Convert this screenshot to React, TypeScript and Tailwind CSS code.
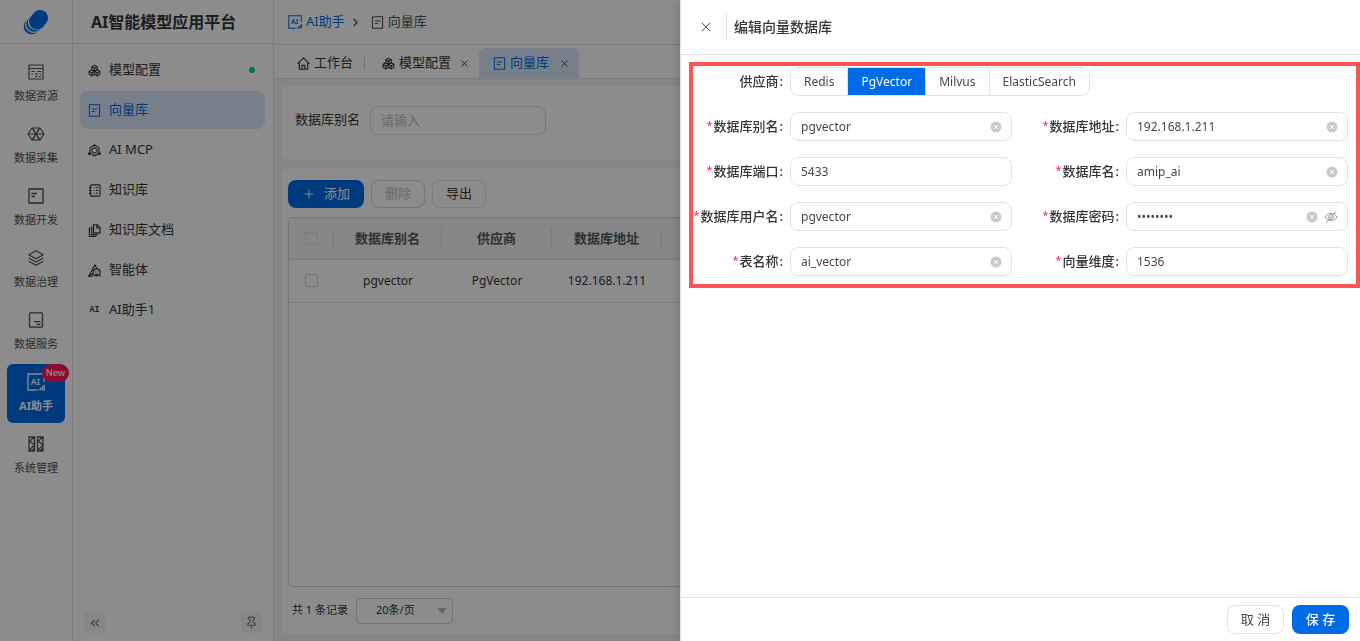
import React, { useState } from 'react';
import { Boxes, ChevronRight, ChevronsLeft, Pin, Plus, X } from 'lucide-react';

type IconProps = { className?: string };

const PanelIcon = ({ className }: IconProps) => (
  <svg viewBox="0 0 16 16" className={className} fill="none" stroke="currentColor" strokeWidth="1.2">
    <path d="M1 1h14v14H1zM1 4.5h14M3.5 7.5h3M9 7.5h4M3.5 10h1.5M7 10h3M11.5 10H13M7 12.5h2.5M11 12.5h2" />
  </svg>
);

const CollectIcon = ({ className }: IconProps) => (
  <svg viewBox="0 0 18 16" className={className} fill="none" stroke="currentColor" strokeWidth="1.2">
    <path d="M5 2h8l4 6-4 6H5L1 8z" />
    <path d="M1 8h16M5 2c4 2.5 4 9.5 0 12M13 2c-4 2.5-4 9.5 0 12M5 2l8 12M13 2L5 14" />
  </svg>
);

const DevIcon = ({ className }: IconProps) => (
  <svg viewBox="0 0 16 16" className={className} fill="none" stroke="currentColor" strokeWidth="1.3">
    <path d="M1 1h14v14H1zM3.5 5.5H9M3.5 8.5H7" />
  </svg>
);

const LayersIcon = ({ className }: IconProps) => (
  <svg viewBox="0 0 16 16" className={className} fill="none" stroke="currentColor" strokeWidth="1.2" strokeLinejoin="round">
    <path d="M8 .8l7.3 4L8 8.8.7 4.8zM.7 8L8 12l7.3-4M.7 11.2l7.3 4 7.3-4" />
  </svg>
);

const ServiceIcon = ({ className }: IconProps) => (
  <svg viewBox="0 0 16 16" className={className} fill="none" stroke="currentColor" strokeWidth="1.3">
    <rect x="1.5" y=".8" width="13" height="14.4" rx="1" />
    <path d="M6 9.7h6.5M8.5 12.3h4" />
  </svg>
);

const SystemIcon = ({ className }: IconProps) => (
  <svg viewBox="0 0 16 16" className={className} fill="none" stroke="currentColor" strokeWidth="1.3">
    <path d="M1 1h5.5v14H1zM9.5 1H15v14H9.5zM1 6l5-5M1.5 5l5 4-5 5M4 15l2.5-3M9.5 6l5-5M10 5l5 4-5 5M12 15l3-3" />
  </svg>
);

const AiIcon = ({ className }: IconProps) => (
  <svg viewBox="0 0 18 18" className={className} fill="none" stroke="currentColor" strokeWidth="1.3">
    <path d="M17 9V1H1v16h9M11.5 17.5V16M13.500 17.5v-3M15.500 17.5V13M17.2 17.5v-6" />
    <text x="8.5" y="12" textAnchor="middle" fontSize="9" fontWeight="600" fontFamily="Noto Sans, sans-serif" fill="currentColor" stroke="none">AI</text>
  </svg>
);

const DocIcon = ({ className }: IconProps) => (
  <svg viewBox="0 0 14 14" className={className} fill="none" stroke="currentColor" strokeWidth="1.1">
    <path d="M1.5.7h11v12.6h-11zM4 5.5h6M4 8h3.5" />
  </svg>
);

const McpIcon = ({ className }: IconProps) => (
  <svg viewBox="0 0 16 16" className={className} fill="none" stroke="currentColor" strokeWidth="1.3">
    <path d="M8 1.5l5.6 3.200v6.6L8 14.5l-5.600-3.200V4.700z" />
    <path d="M8 4.600l3 1.700v3.400l-3 1.700-3-1.700V6.300z" />
    <circle cx="8" cy="1.500" r="1.300" fill="currentColor" stroke="none" />
    <circle cx="1.800" cy="12" r="1.700" fill="currentColor" stroke="none" />
    <circle cx="14.200" cy="12" r="1.700" fill="currentColor" stroke="none" />
  </svg>
);

const NotebookIcon = ({ className }: IconProps) => (
  <svg viewBox="0 0 14 14" className={className} fill="none" stroke="currentColor" strokeWidth="1.2">
    <rect x="2.5" y="1" width="10.5" height="12" rx="1" />
    <path d="M1 4h3M1 7h3M1 10h3M6 4h1M8.5 4H11M6 7h1M8.5 7H11M6 10h1M8.5 10H11" />
  </svg>
);

const FilesIcon = ({ className }: IconProps) => (
  <svg viewBox="0 0 14 14" className={className} fill="none" stroke="currentColor" strokeWidth="1.3">
    <path d="M6 .8h4L13 4v5.5H6zM9.5 1v3.300H13M4 2.800v8.700h7M2.500 4.500h-1v8.800H9" />
  </svg>
);

const AgentIcon = ({ className }: IconProps) => (
  <svg viewBox="0 0 14 14" className={className} fill="none" stroke="currentColor" strokeWidth="1.2">
    <path d="M9.500 4.500L7.500 1 .8 13h4.500M.8 13L6 10M7.800 8.500h.8M10.200 8.500h.8M8 10.700c.8.600 1.800.600 2.600 0M12 12l1.500 1.200" />
    <circle cx="9.300" cy="9" r="3.800" />
  </svg>
);

const AiTextIcon = ({ className }: IconProps) => (
  <svg viewBox="0 0 14 14" className={className}>
    <text x="7" y="9" textAnchor="middle" fontSize="9" fontWeight="700" fontFamily="Liberation Mono, monospace" fill="currentColor">AI</text>
  </svg>
);

const HomeIcon = ({ className }: IconProps) => (
  <svg viewBox="0 0 14 14" className={className} fill="none" stroke="currentColor" strokeWidth="1.2">
    <path d="M.6 7.3L7 1l6.4 6.3M2.5 6v7.2h9V6M5.5 13V9h3v4" />
  </svg>
);

// stacked discs, each one cutting a crescent out of the one behind
const Logo = ({ className }: IconProps) => (
  <svg viewBox="0 0 26 26" className={className}>
    <circle cx="8.6" cy="17.4" r="7.9" fill="#006be6" />
    <circle cx="10.4" cy="15.600" r="8.300" fill="#fff" />
    <circle cx="11.200" cy="14.800" r="8" fill="#006be6" />
    <circle cx="13" cy="13" r="8.300" fill="#fff" />
    <path d="M14 12.600L17 9" stroke="#006be6" strokeWidth="16" strokeLinecap="round" />
  </svg>
);

const ClearIcon = ({ className }: IconProps) => (
  <svg viewBox="0 0 12 12" className={className}>
    <circle cx="6" cy="6" r="5.5" fill="#c9cacb" />
    <path d="M4 4l4 4M8 4L4 8" stroke="#fff" strokeWidth="1" />
  </svg>
);

const EyeOffIcon = ({ className }: IconProps) => (
  <svg viewBox="0 0 14 14" className={className} fill="none" stroke="currentColor" strokeWidth="1">
    <path d="M1 7c2.7-4.7 9.3-4.7 12 0-2.7 4.7-9.3 4.7-12 0zM12 1.5L2.5 12.5" />
    <circle cx="7" cy="7" r="2.3" />
  </svg>
);

const railItems = [
  { label: '数据资源', icon: PanelIcon, size: 'size-4' },
  { label: '数据采集', icon: CollectIcon, size: 'h-4 w-[18px]' },
  { label: '数据开发', icon: DevIcon, size: 'size-4' },
  { label: '数据治理', icon: LayersIcon, size: 'size-4' },
  { label: '数据服务', icon: ServiceIcon, size: 'size-4' },
  { label: 'AI助手', icon: AiIcon, size: 'size-[18px]', active: true, badge: 'New' },
  { label: '系统管理', icon: SystemIcon, size: 'size-4' },
];

const menuItems = [
  { label: '模型配置', icon: Boxes, dot: true },
  { label: '向量库', icon: DocIcon, active: true },
  { label: 'AI MCP', icon: McpIcon },
  { label: '知识库', icon: NotebookIcon },
  { label: '知识库文档', icon: FilesIcon },
  { label: '智能体', icon: AgentIcon },
  { label: 'AI助手1', icon: AiTextIcon },
];

const vendors = ['Redis', 'PgVector', 'Milvus', 'ElasticSearch'];

const fields = [
  { id: 'alias', label: '数据库别名', value: 'pgvector', clearable: true },
  { id: 'host', label: '数据库地址', value: '192.168.1.211', clearable: true },
  { id: 'port', label: '数据库端口', value: '5433' },
  { id: 'dbname', label: '数据库名', value: 'amip_ai', clearable: true },
  { id: 'user', label: '数据库用户名', value: 'pgvector', clearable: true },
  { id: 'password', label: '数据库密码', value: 'postgres', clearable: true, secret: true },
  { id: 'table', label: '表名称', value: 'ai_vector', clearable: true },
  { id: 'dimension', label: '向量维度', value: '1536' },
];

function Rail() {
  return (
    <nav className="flex w-[73px] shrink-0 flex-col border-r border-[#e4e4e7]">
      <div className="flex h-11 items-center justify-center border-b border-[#e4e4e7]">
        <Logo className="size-[26px]" />
      </div>
      <div className="flex flex-col gap-[3px] px-[7px] pt-[10px]">
        {railItems.map(({ label, icon: Icon, size, active, badge }) => (
          <a
            key={label}
            href="#"
            className={`relative flex h-[59px] flex-col items-center rounded-md pt-[9px] text-[11px] leading-4 ${
              active ? 'bg-[#006be6] font-bold text-white' : 'text-[#4b5055]'
            }`}
          >
            <span className="flex h-[18px] items-center">
              <Icon className={size} />
            </span>
            <span className="mt-[7px] whitespace-nowrap">{label}</span>
            {badge && (
              <span className="absolute -right-1 top-0 rounded-full bg-[#ff1457] px-1 text-[9px] font-medium leading-[18px] text-white">
                {badge}
              </span>
            )}
          </a>
        ))}
      </div>
    </nav>
  );
}

function SideMenu() {
  return (
    <aside className="flex w-[201px] shrink-0 flex-col border-r border-[#e4e4e7]">
      <h1 className="flex h-11 items-center border-b border-[#e4e4e7] pl-[18px] text-base font-bold text-[#323639]">
        AI智能模型应用平台
      </h1>
      <ul className="flex flex-col gap-[2px] pl-[7px] pr-2 pt-[7px]">
        {menuItems.map(({ label, icon: Icon, active, dot }) => (
          <li key={label}>
            <a
              href="#"
              className={`flex h-[38px] items-center gap-2 rounded-lg px-2 text-[13px] ${
                active ? 'bg-[#d9e9fb] text-[#006be6]' : 'text-[#323639]'
              }`}
            >
              <Icon className="size-[13px]" />
              <span className="flex-1">{label}</span>
              {dot && <span className="mr-[2px] size-[6px] rounded-full bg-[#00d68f]" />}
            </a>
          </li>
        ))}
      </ul>
      <div className="mt-auto flex justify-between px-[11px] pb-2 text-[#71757a]">
        <button type="button" aria-label="收起" className="flex size-[21px] items-center justify-center rounded-sm bg-[#f4f4f5]">
          <ChevronsLeft className="size-[14px]" />
        </button>
        <button type="button" aria-label="固定" className="flex size-[21px] items-center justify-center rounded-sm bg-[#f4f4f5]">
          <Pin className="size-[13px]" />
        </button>
      </div>
    </aside>
  );
}

function TabBar() {
  return (
    <div className="flex h-[34px] shrink-0 items-end border-b border-[#e4e4e7] pl-[10px] text-[13px] text-[#323639]">
      <a href="#" className="flex h-[30px] items-center gap-1 pl-[13px] pr-[11px]">
        <HomeIcon className="size-[13px]" />
        工作台
      </a>
      <span className="mb-2 h-[14px] w-px bg-[#d4d4d8]" />
      <div className="flex h-[30px] items-center pl-[17px] pr-[9px]">
        <a href="#" className="flex items-center gap-1">
          <Boxes className="size-[13px]" />
          模型配置
        </a>
        <button type="button" aria-label="关闭模型配置" className="ml-2">
          <X className="size-[11px]" />
        </button>
      </div>
      <div className="flex h-[30px] items-center rounded-t-md bg-[#d9e9fb] pl-[14px] pr-[9px]">
        <a href="#" className="flex items-center gap-1 text-[#006be6]">
          <DocIcon className="size-[13px]" />
          向量库
        </a>
        <button type="button" aria-label="关闭向量库" className="ml-[10px]">
          <X className="size-[11px]" />
        </button>
      </div>
    </div>
  );
}

function VectorTable() {
  const bodyCell = 'border-b border-[#e4e4e7] text-center text-xs';
  const headLabel = 'block h-5 border-r border-[#dcdcdf] leading-5';

  return (
    <div className="mt-[9px] flex-1 overflow-hidden rounded-sm border border-[#d4d4d8]">
      <table className="w-full table-fixed border-collapse text-[13px] text-[#323639]">
        <thead>
          <tr className="h-[41px] border-b border-[#e4e4e7] bg-[#f4f4f5] text-[#54585d]">
            <th className="w-[45px] py-[10px]">
              <span className="flex h-5 items-center justify-center border-r border-[#dcdcdf]">
                <input type="checkbox" aria-label="全选" className="block size-[13px] appearance-none rounded-xs border border-[#dfe0e3]" />
              </span>
            </th>
            <th className="w-[108px] font-bold"><span className={headLabel}>数据库别名</span></th>
            <th className="w-[110px] font-bold"><span className={headLabel}>供应商</span></th>
            <th className="w-[110px] font-bold"><span className={headLabel}>数据库地址</span></th>
            <th className="font-bold">数据库名</th>
          </tr>
        </thead>
        <tbody>
          <tr className="h-[43px]">
            <td className={bodyCell}>
              <input type="checkbox" aria-label="选择 pgvector" className="mx-auto block size-[13px] appearance-none rounded-xs border border-[#ccd3da]" />
            </td>
            <td className={bodyCell}>pgvector</td>
            <td className={bodyCell}>PgVector</td>
            <td className={bodyCell}>192.168.1.211</td>
            <td className={bodyCell}>amip_ai</td>
          </tr>
        </tbody>
      </table>
    </div>
  );
}

function Workspace() {
  return (
    <main className="flex min-w-0 flex-1 flex-col">
      <div className="flex h-[45px] shrink-0 items-center border-b border-[#e4e4e7] pl-[14px] text-[13px] text-[#4b5055]">
        <a href="#" className="flex items-center gap-1 text-[#006be6]">
          <AiIcon className="size-[14px]" />
          AI助手
        </a>
        <ChevronRight className="mx-1 size-[13px]" />
        <span className="ml-[5px] flex items-center gap-1">
          <DocIcon className="size-[13px]" />
          向量库
        </span>
      </div>
      <TabBar />
      <div className="flex flex-1 flex-col gap-2 bg-[#f1f3f6] p-[7px]">
        <form className="flex h-[74px] items-center rounded-md bg-white px-[14px] pb-[6px] text-[13px] text-[#323639]">
          <label htmlFor="q-alias">数据库别名</label>
          <input
            id="q-alias"
            placeholder="请输入"
            className="ml-[10px] h-[29px] w-[176px] rounded-lg border border-[#dcdcdf] px-[10px] placeholder:text-[#bfc1c4]"
          />
        </form>
        <section className="flex flex-1 flex-col rounded-md bg-white px-[7px] pt-3">
          <div className="flex gap-[7px] text-[13px]">
            <button type="button" className="flex h-7 items-center gap-2 rounded-lg bg-[#006be6] px-[14px] text-white">
              <Plus className="size-[14px]" strokeWidth={1.5} />
              添加
            </button>
            <button type="button" disabled className="h-7 rounded-lg border border-[#d4d4d8] px-[13px] text-[#bfc1c4]">
              删除
            </button>
            <button type="button" className="h-7 rounded-lg border border-[#e4e4e7] px-[13px] text-[#323639]">
              导出
            </button>
          </div>
          <VectorTable />
          <div className="flex h-[47px] items-center gap-2 pl-1 text-[11px] text-[#323639]">
            <span>共 1 条记录</span>
            <div className="relative">
              <select aria-label="每页条数" className="h-[26px] w-[97px] appearance-none rounded-sm border border-[#d4d4d8] pl-[19px]">
                <option>20条/页</option>
              </select>
              <svg viewBox="0 0 10 6" className="pointer-events-none absolute right-[6px] top-[10px] h-[6px] w-[10px]">
                <path d="M0 0h10L5 6z" fill="#b9bcc4" />
              </svg>
            </div>
          </div>
        </section>
      </div>
    </main>
  );
}

function EditDrawer() {
  const [vendor, setVendor] = useState('PgVector');
  const [values, setValues] = useState<Record<string, string>>(
    Object.fromEntries(fields.map((f) => [f.id, f.value]))
  );
  const [showSecret, setShowSecret] = useState(false);

  const setValue = (id: string, value: string) => setValues((prev) => ({ ...prev, [id]: value }));

  return (
    <div
      role="dialog"
      aria-labelledby="drawer-title"
      className="fixed inset-y-0 right-0 flex w-1/2 flex-col border-l border-[#e4e4e7] bg-white text-[#323639] shadow-[0_0_12px_rgba(0,0,0,0.2)]"
    >
      <header className="flex h-[55px] shrink-0 items-center border-b border-[#e4e4e7] pl-[17px]">
        <button type="button" aria-label="关闭" className="text-[#54585d]">
          <X className="size-4" strokeWidth={1.5} />
        </button>
        <span className="ml-3 h-7 w-px bg-[#e4e4e7]" />
        <h2 id="drawer-title" className="ml-[7px] text-sm font-medium">编辑向量数据库</h2>
      </header>

      <div className="flex-1 pl-2 pt-[7px]">
        <form className="grid grid-cols-2 gap-x-[17px] gap-y-4 border-4 border-[#ff5252] pb-2 pr-2 pt-px">
          <div role="radiogroup" aria-labelledby="vendor-label" className="col-span-2 flex items-center">
            <span id="vendor-label" className="flex w-[97px] shrink-0 justify-end pr-[7px] text-[13px] font-medium">
              供应商<span className="ml-px">:</span>
            </span>
            <div className="flex h-[29px] overflow-hidden rounded-lg border border-[#e4e4e7] text-xs text-[#44484c]">
              {vendors.map((name) => (
                <label
                  key={name}
                  className={`flex items-center border-l border-[#e4e4e7] px-[13px] first:border-l-0 ${
                    vendor === name ? 'bg-[#006be6] text-white' : ''
                  }`}
                >
                  <input type="radio" name="vendor" className="sr-only" checked={vendor === name} onChange={() => setVendor(name)} />
                  {name}
                </label>
              ))}
            </div>
          </div>

          {fields.map((field) => (
            <div key={field.id} className="flex items-center">
              <label htmlFor={field.id} className="flex w-[97px] shrink-0 justify-end whitespace-nowrap pr-[7px] text-[13px] font-medium">
                <span className="mr-px text-[11px] text-[#ff3860]">*</span>
                {field.label}
                <span className="ml-px">:</span>
              </label>
              <div className="flex h-[29px] min-w-0 flex-1 items-center gap-[6px] rounded-lg border border-[#e4e4e7] pl-[10px] pr-[9px]">
                <input
                  id={field.id}
                  type={field.secret && !showSecret ? 'password' : 'text'}
                  value={values[field.id]}
                  onChange={(e) => setValue(field.id, e.target.value)}
                  className="min-w-0 flex-1 text-xs text-[#44484c] outline-none"
                />
                {field.clearable && (
                  <button type="button" aria-label={`清空${field.label}`} onClick={() => setValue(field.id, '')}>
                    <ClearIcon className="size-3" />
                  </button>
                )}
                {field.secret && (
                  <button type="button" aria-label="显示密码" className="text-[#8f9296]" onClick={() => setShowSecret(!showSecret)}>
                    <EyeOffIcon className="size-[14px]" />
                  </button>
                )}
              </div>
            </div>
          ))}
        </form>
      </div>

      <footer className="flex h-11 shrink-0 items-center justify-end gap-2 border-t border-[#e4e4e7] pr-[11px] text-[13px]">
        <button type="button" className="h-[29px] w-[57px] rounded-lg border border-[#e4e4e7] text-[#44484c]">取 消</button>
        <button type="button" className="h-[29px] w-[57px] rounded-lg bg-[#006be6] font-medium text-white">保 存</button>
      </footer>
    </div>
  );
}

export default function App() {
  return (
    <div className="flex min-h-screen bg-white font-['Noto_Sans','Noto_Sans_CJK_SC',sans-serif]">
      <Rail />
      <SideMenu />
      <Workspace />
      <div className="fixed inset-0 bg-black/45" />
      <EditDrawer />
    </div>
  );
}
